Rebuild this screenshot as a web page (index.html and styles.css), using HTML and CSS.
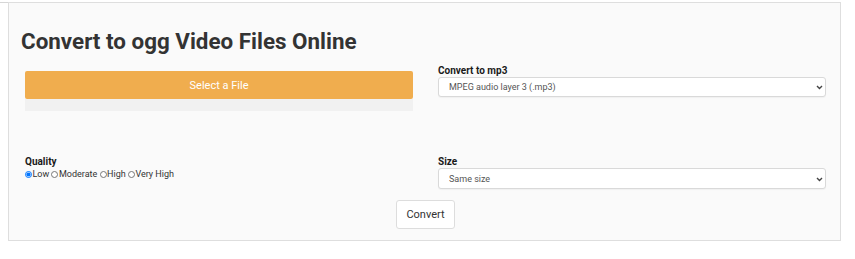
FILE: index.html
```html
<!DOCTYPE html>
<html>
<head>
<meta charset="utf-8">
<link rel="stylesheet" href="styles.css">
</head>
<body>
<div class="topline"></div>
<div class="card">
  <h1 class="title">Convert to ogg Video Files Online</h1>
  <div class="row row-first">
    <div class="col">
      <button class="select-file">Select a File</button>
      <div class="progress"></div>
    </div>
    <div class="col">
      <label class="field-label">Convert to mp3</label>
      <div class="select-wrap">
        <select class="select"><option>MPEG audio layer 3 (.mp3)</option></select>
        <svg class="chev" width="7" height="5" viewBox="0 0 7 5"><path d="M1 1 L3.5 3.5 L6 1" fill="none" stroke="#444" stroke-width="1.4"/></svg>
      </div>
    </div>
  </div>
  <div class="row row-second">
    <div class="col">
      <label class="field-label">Quality</label>
      <div class="radios"><label class="opt"><input type="radio" name="q" checked>Low</label> <label class="opt"><input type="radio" name="q">Moderate</label> <label class="opt"><input type="radio" name="q">High</label> <label class="opt"><input type="radio" name="q">Very High</label></div>
    </div>
    <div class="col">
      <label class="field-label">Size</label>
      <div class="select-wrap">
        <select class="select tall"><option>Same size</option></select>
        <svg class="chev" width="7" height="5" viewBox="0 0 7 5"><path d="M1 1 L3.5 3.5 L6 1" fill="none" stroke="#444" stroke-width="1.4"/></svg>
      </div>
    </div>
  </div>
  <div class="actions">
    <button class="convert">Convert</button>
  </div>
</div>
</body>
</html>
```
FILE: styles.css
```css
html, body {
  margin: 0;
  padding: 0;
  background: #ffffff;
  font-family: Roboto, "Liberation Sans", Arial, sans-serif;
}
.topline {
  width: 750px;
  height: 2px;
  border-bottom: 1px solid #d6d6d6;
}
.card {
  margin: -1px 0 0 8px;
  width: 801px;
  padding: 25px 14px 11px 16px;
  border: 1px solid #dedede;
  background: #fafafa;
}
.title {
  margin: 0 0 0 -4px;
  font-size: 22.4px;
  line-height: 26px;
  font-weight: 700;
  color: #333333;
}
.row {
  display: grid;
  grid-template-columns: 388px 388px;
  column-gap: 25px;
}
.row-first { margin-top: 10px; }
.row-second { margin-top: 44px; }
.col {
  display: flex;
  flex-direction: column;
}
.select-file {
  margin-top: 7px;
  height: 28px;
  border: none;
  border-radius: 2px;
  background: #f0ad4e;
  color: #ffffff;
  font-family: inherit;
  font-size: 11px;
  padding: 0;
}
.progress {
  height: 12px;
  background: #f1f1f1;
}
.field-label {
  display: block;
  font-size: 10px;
  line-height: 13px;
  font-weight: 700;
  color: #1a1a1a;
}
.select-wrap {
  position: relative;
  display: flex;
}
.select {
  appearance: none;
  -webkit-appearance: none;
  width: 388px;
  height: 20px;
  margin: 0;
  padding: 0 10px;
  border: 1px solid #d9d9d9;
  border-radius: 3px;
  background: #ffffff;
  font-family: inherit;
  font-size: 9px;
  color: #555555;
  box-shadow: 0 1px 1px rgba(0,0,0,0.04);
}
.select.tall { height: 21px; }
.chev {
  position: absolute;
  right: 3px;
  top: 50%;
  margin-top: -2px;
  pointer-events: none;
}
.radios {
  font-size: 9px;
  line-height: 13px;
  color: #333333;
}
.opt input {
  width: 7px;
  height: 7px;
  margin: 0 0.5px 0 0;
  vertical-align: -1px;
}
.actions {
  display: flex;
  justify-content: center;
  margin-top: 11px;
}
.convert {
  width: 59px;
  height: 29px;
  padding: 0;
  border: 1px solid #dddddd;
  border-radius: 3px;
  background: #ffffff;
  color: #333333;
  font-family: inherit;
  font-size: 11px;
}
```
